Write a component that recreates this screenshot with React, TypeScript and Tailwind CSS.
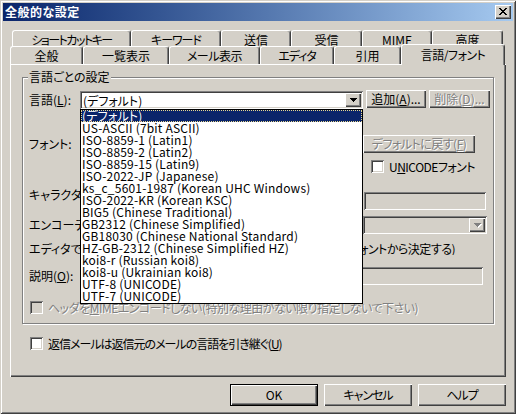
import React from "react";

const raised =
  "shadow-[inset_1px_1px_0_#fff,inset_-1px_-1px_0_#404040,inset_-2px_-2px_0_#808080]";
const sunken =
  "shadow-[inset_1px_1px_0_#808080,inset_-1px_-1px_0_#fff,inset_2px_2px_0_#404040,inset_-2px_-2px_0_#d4d0c8]";
const dis = "text-[#808080] [text-shadow:1px_1px_0_#fff]";

function U({ children }: { children: React.ReactNode }) {
  return <span className="underline underline-offset-[1px]">{children}</span>;
}

function Arrow({ disabled }: { disabled?: boolean }) {
  const c = disabled ? "#808080" : "#000";
  return (
    <svg width="8" height="5" viewBox="0 0 8 5" shapeRendering="crispEdges">
      {disabled && (
        <g fill="#fff">
          <rect x="1" y="1" width="7" height="1" />
          <rect x="2" y="2" width="5" height="1" />
          <rect x="3" y="3" width="3" height="1" />
          <rect x="4" y="4" width="1" height="1" />
        </g>
      )}
      <g fill={c}>
        <rect x="0" y="0" width="7" height="1" />
        <rect x="1" y="1" width="5" height="1" />
        <rect x="2" y="2" width="3" height="1" />
        <rect x="3" y="3" width="1" height="1" />
      </g>
    </svg>
  );
}

function CloseGlyph() {
  const rows: [number, number][][] = [
    [[0, 2], [6, 2]],
    [[1, 2], [5, 2]],
    [[2, 4]],
    [[3, 2]],
    [[2, 4]],
    [[1, 2], [5, 2]],
    [[0, 2], [6, 2]],
  ];
  return (
    <svg width="8" height="7" viewBox="0 0 8 7" shapeRendering="crispEdges">
      {rows.map((r, y) =>
        r.map(([x, w], i) => (
          <rect key={`${y}-${i}`} x={x} y={y} width={w} height="1" fill="#000" />
        ))
      )}
    </svg>
  );
}

function Tab({
  className,
  children,
}: {
  className: string;
  children: React.ReactNode;
}) {
  return (
    <div
      className={`flex shrink-0 items-center justify-center pt-[1px] rounded-t-[3px] border-l border-t border-r border-white border-r-[#404040] shadow-[inset_-1px_0_0_#808080] bg-[#d4d0c8] whitespace-nowrap ${className}`}
    >
      {children}
    </div>
  );
}

function Check({ disabled }: { disabled?: boolean }) {
  return (
    <div
      className={`w-[13px] h-[13px] shrink-0 ${sunken} ${
        disabled ? "bg-[#d4d0c8]" : "bg-white"
      }`}
    />
  );
}

const items = [
  "(デフォルト)",
  "US-ASCII (7bit ASCII)",
  "ISO-8859-1 (Latin1)",
  "ISO-8859-2 (Latin2)",
  "ISO-8859-15 (Latin9)",
  "ISO-2022-JP (Japanese)",
  "ks_c_5601-1987 (Korean UHC Windows)",
  "ISO-2022-KR (Korean KSC)",
  "BIG5 (Chinese Traditional)",
  "GB2312 (Chinese Simplified)",
  "GB18030 (Chinese National Standard)",
  "HZ-GB-2312 (Chinese Simplified HZ)",
  "koi8-r (Russian koi8)",
  "koi8-u (Ukrainian koi8)",
  "UTF-8 (UNICODE)",
  "UTF-7 (UNICODE)",
];

export default function App() {
  return (
    <div className="w-[516px] h-[414px] bg-[#d4d0c8] p-[3px] flex flex-col shadow-[inset_1px_1px_0_#d4d0c8,inset_-1px_-1px_0_#404040,inset_2px_2px_0_#fff,inset_-2px_-2px_0_#808080] font-['Noto_Sans_CJK_JP',sans-serif] [font-feature-settings:'palt'] text-[12px] leading-[12px] text-black overflow-hidden">
      {/* title bar */}
      <div className="h-[18px] shrink-0 flex items-center bg-linear-to-r from-[#0a246a] to-[#a6caf0]">
        <span className="pl-[2px] font-bold text-white text-[12px] leading-[12px] tracking-[0.5px]">
          全般的な設定
        </span>
        <div
          className={`ml-auto mr-[2px] w-[16px] h-[14px] bg-[#d4d0c8] flex items-center justify-center pr-[1px] pb-[1px] ${raised}`}
        >
          <CloseGlyph />
        </div>
      </div>

      {/* tab control */}
      <div className="mt-[9px] px-[7px] flex flex-col">
        <div className="flex pl-[2px] h-[18px]">
          <Tab className="w-[119px] h-[18px] tracking-[-1.5px]">ショートカットキー</Tab>
          <Tab className="w-[90px] h-[18px] tracking-[-1px]">キーワード</Tab>
          <Tab className="w-[70px] h-[18px]">送信</Tab>
          <Tab className="w-[71px] h-[18px]">受信</Tab>
          <Tab className="w-[70px] h-[18px]">MIME</Tab>
          <Tab className="w-[71px] h-[18px]">高度</Tab>
        </div>
        <div className="flex -mt-[2px] h-[18px] items-start">
          <Tab className="w-[73px] h-[18px]">全般</Tab>
          <Tab className="w-[86px] h-[18px]">一覧表示</Tab>
          <Tab className="w-[91px] h-[18px] tracking-[-0.5px]">メール表示</Tab>
          <Tab className="w-[74px] h-[18px] tracking-[-1px]">エディタ</Tab>
          <Tab className="w-[67px] h-[18px]">引用</Tab>
          <Tab className="relative z-10 w-[104px] h-[21px] -mt-[2px] pb-[2px] tracking-[-0.5px]">
            言語/フォント
          </Tab>
        </div>

        {/* panel */}
        <div className="relative h-[313px] w-[496px] shadow-[inset_1px_1px_0_#fff,inset_-1px_-1px_0_#404040,inset_-2px_-2px_0_#808080] pt-[13px] pl-[12px] flex flex-col">
          {/* group box */}
          <div className="relative w-[472px] h-[247px] shrink-0 border border-[#808080] shadow-[inset_1px_1px_0_#fff,1px_1px_0_#fff] pl-[6px] flex flex-col">
            <span className="absolute left-[5px] -top-[7px] px-[1px] bg-[#d4d0c8] leading-[12px]">
              言語ごとの設定
            </span>

            {/* row A */}
            <div className="mt-[12px] flex h-[19px] items-start">
              <span className="w-[51px] mt-[4px] whitespace-nowrap">
                言語(<U>L</U>):
              </span>
              <div
                className={`relative mt-[1px] w-[283px] h-[18px] bg-white flex items-center ${sunken}`}
              >
                <span className="pl-[3px] pt-[1px]">(デフォルト)</span>
                <div
                  className={`ml-auto mr-[2px] w-[16px] h-[14px] bg-[#d4d0c8] flex items-center justify-center pl-[1px] ${raised}`}
                >
                  <Arrow />
                </div>
                {/* dropdown list */}
                <div className="absolute z-20 left-0 top-[18px] w-[283px] h-[195px] bg-white border border-black flex flex-col">
                  {items.map((it, i) => (
                    <div
                      key={it}
                      className={`h-[12px] shrink-0 leading-[12px] whitespace-nowrap pl-[1px] tracking-[0.2px] ${
                        i === 0
                          ? "bg-[#0a246a] text-white outline-1 outline-dotted outline-[#e8d890] -outline-offset-1"
                          : ""
                      }`}
                    >
                      {it}
                    </div>
                  ))}
                </div>
              </div>
              <div
                className={`ml-[3px] w-[60px] h-[18px] flex items-center justify-center ${raised}`}
              >
                追加(<U>A</U>)...
              </div>
              <div
                className={`ml-[3px] w-[61px] h-[18px] flex items-center justify-center ${raised} ${dis}`}
              >
                削除(<U>D</U>)...
              </div>
            </div>

            {/* row B */}
            <div className="mt-[26px] flex h-[18px] items-center">
              <span className="w-[51px] whitespace-nowrap">フォント:</span>
              <div className="w-[283px] shrink-0" />
              <div
                className={`w-[112px] h-[18px] flex items-center justify-center tracking-[-0.5px] ${raised} ${dis}`}
              >
                デフォルトに戻す(<U>F</U>)
              </div>
            </div>

            {/* row C */}
            <div className="mt-[7px] flex h-[13px] items-center">
              <div className="ml-[342px]">
                <Check />
              </div>
              <span className="ml-[5px] tracking-[-0.5px]">
                U<U>N</U>ICODEフォント
              </span>
            </div>

            {/* row D */}
            <div className="mt-[19px] flex h-[18px] items-start">
              <span className="mt-[-3px] w-[51px] overflow-hidden whitespace-nowrap">
                キャラクタセット(C):
              </span>
              <div className={`ml-auto mr-[7px] w-[122px] h-[18px] bg-[#d4d0c8] ${sunken}`} />
            </div>

            {/* row E */}
            <div className="mt-[6px] flex h-[18px] items-center">
              <span className="w-[51px] overflow-hidden whitespace-nowrap">
                エンコーディング(E):
              </span>
              <div
                className={`ml-auto mr-[6px] w-[124px] h-[18px] bg-[#d4d0c8] flex items-center ${sunken}`}
              >
                <div
                  className={`ml-auto mr-[2px] w-[16px] h-[14px] bg-[#d4d0c8] flex items-center justify-center pl-[1px] ${raised}`}
                >
                  <Arrow disabled />
                </div>
              </div>
            </div>

            {/* row F */}
            <div className="mt-[9px] flex h-[12px] items-center whitespace-nowrap">
              <span className="w-[51px] overflow-hidden">エディタで使用するフォント:</span>
              <div className="w-[283px] shrink-0" />
              <span className="w-[110px] overflow-hidden tracking-[-0.5px]">
                <span className="block -ml-[17px]">(フォントから決定する)</span>
              </span>
            </div>

            {/* row G */}
            <div className="mt-[12px] flex h-[18px] items-center">
              <span className="w-[51px] whitespace-nowrap">
                説明(<U>O</U>):
              </span>
              <div className={`ml-auto mr-[10px] w-[122px] h-[18px] bg-[#d4d0c8] ${sunken}`} />
            </div>

            {/* row H */}
            <div className="mt-[16px] flex h-[13px] items-center">
              <div className="ml-[1px]">
                <Check disabled />
              </div>
              <span className={`ml-[5px] whitespace-nowrap tracking-[-0.5px] ${dis}`}>
                ヘッダを<U>M</U>IMEエンコードしない(特別な理由がない限り指定しないで下さい)
              </span>
            </div>
          </div>

          {/* reply checkbox */}
          <div className="mt-[13px] ml-[8px] flex h-[13px] items-center">
            <Check />
            <span className="ml-[5px] whitespace-nowrap tracking-[-1px]">
              返信メールは返信元のメールの言語を引き継ぐ(<U>U</U>)
            </span>
          </div>
        </div>
      </div>

      {/* bottom buttons */}
      <div className="mt-[7px] flex justify-end pr-[7px] gap-[6px]">
        <div className="w-[88px] h-[22px] border border-black">
          <div
            className={`w-full h-full flex items-center justify-center ${raised}`}
          >
            OK
          </div>
        </div>
        <div
          className={`w-[88px] h-[22px] flex items-center justify-center tracking-[-1px] ${raised}`}
        >
          キャンセル
        </div>
        <div
          className={`w-[88px] h-[22px] flex items-center justify-center tracking-[-1px] ${raised}`}
        >
          ヘルプ
        </div>
      </div>
    </div>
  );
}
